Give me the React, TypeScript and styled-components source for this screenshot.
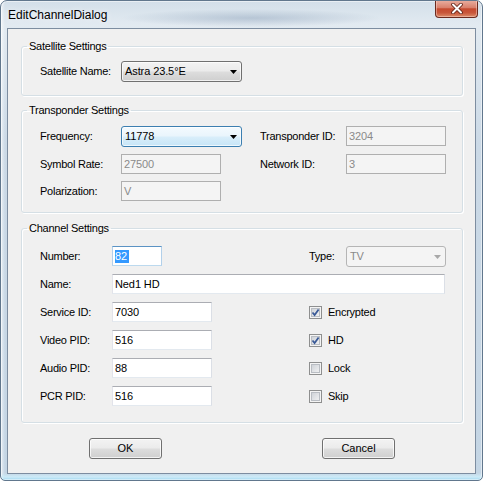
import * as React from 'react'
import styled, { createGlobalStyle, css } from 'styled-components'

const GlobalStyle = createGlobalStyle`
  html, body {
    margin: 0;
    padding: 0;
    background: #ffffff;
  }
  body {
    font-family: 'Liberation Sans', Arial, sans-serif;
    font-size: 11px;
    color: #000;
  }
`

const Window = styled.div`
  box-sizing: border-box;
  width: 483px;
  height: 481px;
  display: flex;
  flex-direction: column;
  padding: 0 6px 6px;
  border: 1px solid #61778d;
  border-radius: 7px 7px 5px 5px;
  overflow: hidden;
  background:
    linear-gradient(to top, #9fd6ef 0, #cdebf8 3px, rgba(220, 238, 248, 0) 7px),
    radial-gradient(ellipse 130px 9px at 250px 17px, rgba(110, 135, 165, 0.35), rgba(110, 135, 165, 0)),
    linear-gradient(to right, rgba(255, 255, 255, 0.6) 0, rgba(255, 255, 255, 0) 4px),
    linear-gradient(180deg, #d3dfe9 0%, #e2eaf1 5%, #cbd9e6 30%, #c4d5e4 100%);
  box-shadow: inset 0 0 0 1px rgba(255, 255, 255, 0.5);
`

const TitleBar = styled.div`
  height: 27px;
  display: flex;
  justify-content: space-between;
  align-items: flex-start;
`

const Title = styled.div`
  padding: 7px 0 0 1px;
  font-size: 12px;
  line-height: 14px;
  color: #000;
  text-shadow: 0 0 6px rgba(255, 255, 255, 0.9);
`

const CloseButton = styled.div`
  box-sizing: border-box;
  width: 43px;
  height: 18px;
  margin: -1px -2px 0 0;
  display: flex;
  align-items: center;
  justify-content: center;
  border: 1px solid #6b2a1e;
  border-top: none;
  border-radius: 0 0 4px 4px;
  background: linear-gradient(180deg, #eab1a3 0%, #d9806c 45%, #c54a2f 52%, #c8563a 75%, #dc8d6a 100%);
  box-shadow: inset 0 0 0 1px rgba(255, 220, 210, 0.45);
`

const Client = styled.div`
  flex: 1;
  display: flex;
  flex-direction: column;
  padding: 11px 12px 0 13px;
  border: 1px solid #7d8da0;
  background: #f0f0f0;
`

const GroupBox = styled.fieldset<{ $top?: number }>`
  margin: ${p => p.$top ?? 0}px 0 0;
  padding: 0;
  min-width: 0;
  border: 1px solid #d5dfe5;
  border-radius: 3px;
  box-shadow: inset 1px 1px 0 #ffffff, 1px 1px 0 #ffffff;
`

const Legend = styled.legend`
  margin-left: 5px;
  padding: 0 2px;
  font-size: 11px;
  line-height: 13px;
  letter-spacing: -0.25px;
`

const SatBody = styled.div`
  display: grid;
  grid-template-columns: 81px auto;
  grid-template-rows: 21px;
  padding: 8px 0 13px 18px;
`

const TransBody = styled.div`
  display: grid;
  grid-template-columns: 81px 139px 86px 100px;
  grid-template-rows: 21px 20px 20px;
  row-gap: 7px;
  padding: 9px 0 11px 18px;
`

const ChanBody = styled.div`
  display: grid;
  grid-template-columns: 72px 197px 37px 100px;
  grid-auto-rows: 20px;
  row-gap: 8px;
  padding: 11px 0 16px 18px;
`

const Label = styled.div<{ $col?: string }>`
  display: flex;
  align-items: center;
  line-height: 13px;
  letter-spacing: -0.25px;
  white-space: nowrap;
  ${p => p.$col && css`grid-column: ${p.$col};`}
`

const Edit = styled.div<{ $w?: number; $disabled?: boolean; $focused?: boolean; $col?: string }>`
  box-sizing: border-box;
  width: ${p => (p.$w ? `${p.$w}px` : 'auto')};
  height: 20px;
  padding: 0 2px;
  display: flex;
  align-items: center;
  border: 1px solid;
  border-color: #abadb3 #dbdfe6 #e3e9ef #e2e3ea;
  background: #ffffff;
  line-height: 13px;
  letter-spacing: -0.1px;
  white-space: nowrap;
  ${p => p.$col && css`grid-column: ${p.$col};`}
  ${p => p.$disabled && css`
    border-color: #afafaf;
    background: #f4f4f4;
    color: #8a8a8a;
  `}
  ${p => p.$focused && css`
    border-color: #5b93c4 #b2d0ea #bcd9ee #b2d0ea;
  `}
`

const Selected = styled.span`
  background: #3399ff;
  color: #ffffff;
  padding: 0 2px 0 0;
`

const Combo = styled.div<{ $w: number; $variant?: 'normal' | 'focused' | 'disabled' }>`
  box-sizing: border-box;
  width: ${p => p.$w}px;
  height: 21px;
  padding: 0 4px 0 3px;
  display: flex;
  align-items: center;
  justify-content: space-between;
  border: 1px solid #707070;
  border-radius: 3px;
  background: linear-gradient(180deg, #f3f3f3 0%, #ebebeb 48%, #dddddd 52%, #cfcfcf 100%);
  box-shadow: inset 0 0 0 1px rgba(255, 255, 255, 0.7);
  line-height: 13px;
  letter-spacing: -0.1px;
  white-space: nowrap;
  ${p => p.$variant === 'focused' && css`
    border-color: #3c7fb1;
    background: linear-gradient(180deg, #f4fafe 0%, #e9f5fc 48%, #d9eefa 52%, #c6e5f7 100%);
  `}
  ${p => p.$variant === 'disabled' && css`
    border-color: #b5b5b5;
    background: #f4f4f4;
    box-shadow: none;
    color: #8a8a8a;
  `}
`

const CheckLine = styled.div`
  grid-column: 3 / span 2;
  display: flex;
  align-items: center;
  gap: 6px;
  line-height: 13px;
  letter-spacing: -0.25px;
`

const CheckBox = styled.span`
  box-sizing: border-box;
  width: 13px;
  height: 13px;
  margin-left: 0;
  display: flex;
  align-items: center;
  justify-content: center;
  border: 1px solid #8e8f8f;
  background: linear-gradient(135deg, #c7cbd1 0%, #e2e4e7 55%, #f7f7f7 100%);
  box-shadow: inset 0 0 0 1px #f4f4f4, inset 0 0 0 2px #b9bdc3;
`

const ButtonRow = styled.div`
  display: flex;
  gap: 160px;
  margin-top: 15px;
  padding-left: 68px;
`

const Button = styled.div`
  box-sizing: border-box;
  width: 73px;
  height: 21px;
  display: flex;
  align-items: center;
  justify-content: center;
  border: 1px solid #707070;
  border-radius: 3px;
  background: linear-gradient(180deg, #f3f3f3 0%, #ebebeb 48%, #dddddd 52%, #cfcfcf 100%);
  box-shadow: inset 0 0 0 1px rgba(255, 255, 255, 0.75);
  line-height: 13px;
`

const Arrow = ({ color = '#000' }: { color?: string }) => (
  <svg width="7" height="4" viewBox="0 0 7 4">
    <polygon points="0,0 7,0 3.5,4" fill={color} />
  </svg>
)

const Check = () => (
  <svg width="9" height="9" viewBox="0 0 9 9">
    <path d="M1.5 4.5 L3.6 7 L7.6 1.5" fill="none" stroke="#3a5a97" strokeWidth="1.8" />
  </svg>
)

const CloseGlyph = () => (
  <svg width="14" height="11" viewBox="0 0 14 11">
    <path d="M3 1.5 L11 9.5 M11 1.5 L3 9.5" stroke="#5b1d12" strokeWidth="3.6" strokeLinecap="round" />
    <path d="M3 1.5 L11 9.5 M11 1.5 L3 9.5" stroke="#ffffff" strokeWidth="2" strokeLinecap="round" />
  </svg>
)

const CheckItem = ({ label, checked }: { label: string; checked?: boolean }) => (
  <CheckLine>
    <CheckBox>{checked && <Check />}</CheckBox>
    {label}
  </CheckLine>
)

const pids = [
  { label: 'Service ID:', value: '7030', flag: 'Encrypted', checked: true },
  { label: 'Video PID:', value: '516', flag: 'HD', checked: true },
  { label: 'Audio PID:', value: '88', flag: 'Lock', checked: false },
  { label: 'PCR PID:', value: '516', flag: 'Skip', checked: false },
]

const App = () => (
  <>
    <GlobalStyle />
    <Window>
      <TitleBar>
        <Title>EditChannelDialog</Title>
        <CloseButton>
          <CloseGlyph />
        </CloseButton>
      </TitleBar>
      <Client>
        <GroupBox>
          <Legend>Satellite Settings</Legend>
          <SatBody>
            <Label>Satellite Name:</Label>
            <Combo $w={121}>
              Astra 23.5°E
              <Arrow />
            </Combo>
          </SatBody>
        </GroupBox>

        <GroupBox $top={8}>
          <Legend>Transponder Settings</Legend>
          <TransBody>
            <Label>Frequency:</Label>
            <Combo $w={121} $variant="focused">
              11778
              <Arrow />
            </Combo>
            <Label>Transponder ID:</Label>
            <Edit $w={100} $disabled>3204</Edit>

            <Label>Symbol Rate:</Label>
            <Edit $w={100} $disabled>27500</Edit>
            <Label>Network ID:</Label>
            <Edit $w={100} $disabled>3</Edit>

            <Label>Polarization:</Label>
            <Edit $w={100} $disabled>V</Edit>
          </TransBody>
        </GroupBox>

        <GroupBox $top={9}>
          <Legend>Channel Settings</Legend>
          <ChanBody>
            <Label>Number:</Label>
            <Edit $w={50} $focused>
              <Selected>82</Selected>
            </Edit>
            <Label>Type:</Label>
            <Combo $w={100} $variant="disabled">
              TV
              <Arrow color="#a8a8a8" />
            </Combo>

            <Label>Name:</Label>
            <Edit $col="2 / span 3" $w={333}>Ned1 HD</Edit>

            {pids.map(p => (
              <React.Fragment key={p.label}>
                <Label $col="1">{p.label}</Label>
                <Edit $w={100}>{p.value}</Edit>
                <CheckItem label={p.flag} checked={p.checked} />
              </React.Fragment>
            ))}
          </ChanBody>
        </GroupBox>

        <ButtonRow>
          <Button>OK</Button>
          <Button>Cancel</Button>
        </ButtonRow>
      </Client>
    </Window>
  </>
)

export default App
